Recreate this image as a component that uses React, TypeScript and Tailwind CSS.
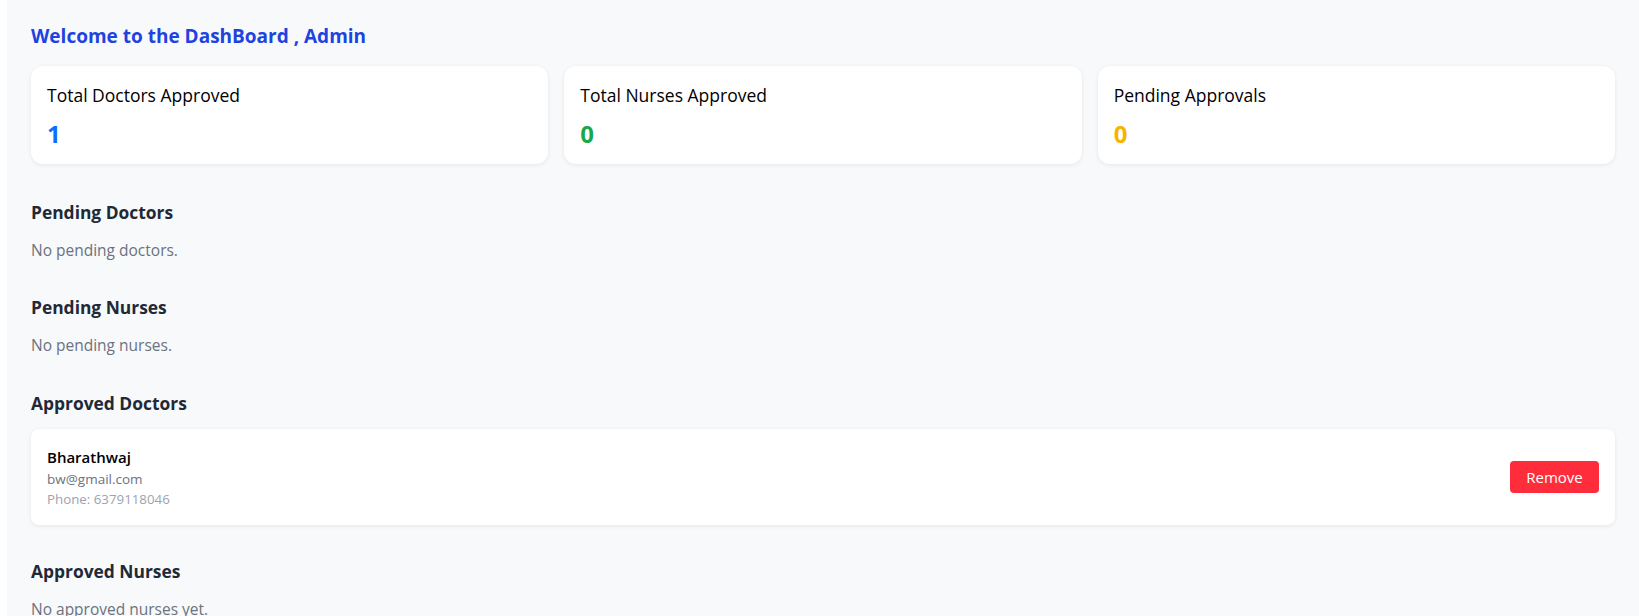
import React from "react";

const font = { fontFamily: '"Open Sans", "Noto Sans", sans-serif' };

function StatCard({ label, value, color }: { label: string; value: string; color: string }) {
  return (
    <div className="bg-white rounded-xl shadow-[0_1px_4px_rgba(0,0,0,0.08)] px-4 pt-[17px] pb-[14px]">
      <div className="text-[17.5px] leading-6 font-medium text-black">{label}</div>
      <div className={`mt-[11px] text-[24px] leading-8 font-bold ${color}`}>{value}</div>
    </div>
  );
}

export default function App() {
  return (
    <div className="flex min-h-[616px] bg-white" style={font}>
      <div className="w-[7px] shrink-0 bg-white" />
      <main className="flex-1 bg-[#f8f9fa] pl-6 pr-6 pt-[22px] pb-6">
        <h1 className="text-[19px] leading-7 font-bold text-[#1d43e0]">Welcome to the DashBoard , Admin</h1>

        <div className="grid grid-cols-3 gap-4 mt-4">
          <StatCard label="Total Doctors Approved" value="1" color="text-[#0d6efd]" />
          <StatCard label="Total Nurses Approved" value="0" color="text-[#18a84a]" />
          <StatCard label="Pending Approvals" value="0" color="text-[#f4b400]" />
        </div>

        <section className="mt-[34px]">
          <h2 className="text-[17.4px] leading-7 font-bold text-[#1f2937]">Pending Doctors</h2>
          <p className="mt-3 text-[15.5px] leading-6 text-[#6b7280]">No pending doctors.</p>
        </section>

        <section className="mt-[31px]">
          <h2 className="text-[17.4px] leading-7 font-bold text-[#1f2937]">Pending Nurses</h2>
          <p className="mt-3 text-[15.5px] leading-6 text-[#6b7280]">No pending nurses.</p>
        </section>

        <section className="mt-8">
          <h2 className="text-[17.4px] leading-7 font-bold text-[#1f2937]">Approved Doctors</h2>
          <div className="mt-3 bg-white rounded-lg shadow-[0_1px_4px_rgba(0,0,0,0.08)] p-4 flex items-center justify-between">
            <div>
              <div className="text-[15px] leading-6 font-semibold text-black">Bharathwaj</div>
              <div className="text-[13.5px] leading-5 text-[#6b7280]">bw@gmail.com</div>
              <div className="text-[13.3px] leading-5 text-[#9ca3af]">Phone: 6379118046</div>
            </div>
            <button className="h-8 w-[89px] rounded bg-[#ff2d3b] text-white text-[15px] leading-8">Remove</button>
          </div>
        </section>

        <section className="mt-8">
          <h2 className="text-[17.4px] leading-7 font-bold text-[#1f2937]">Approved Nurses</h2>
          <p className="mt-3 text-[15.5px] leading-6 text-[#6b7280]">No approved nurses yet.</p>
        </section>
      </main>
    </div>
  );
}
